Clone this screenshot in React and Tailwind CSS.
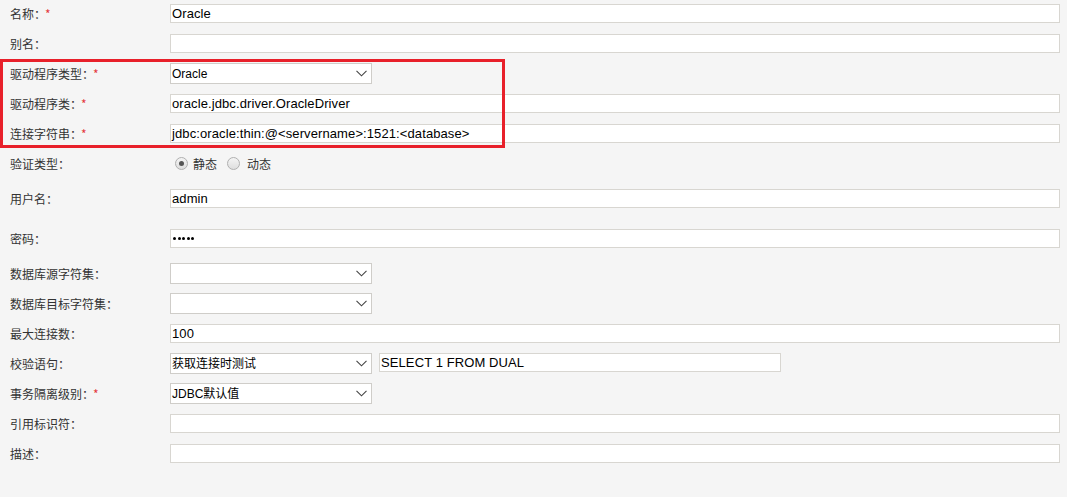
import React from "react";

const labelFont = { fontFamily: '"Noto Sans CJK SC", "Microsoft YaHei", sans-serif' };

function Label({ text, req }) {
  return (
    <div className="w-[170px] shrink-0 pl-[10px] h-[27px] flex items-center text-[12px] text-[#333]" style={labelFont}>
      <span>{text}：</span>
      {req && <span className="text-[#e4393c] -ml-[1px]">*</span>}
    </div>
  );
}

function TextBox({ value, children, className = "" }) {
  return (
    <div
      className={`mt-[4px] h-[19px] bg-white border border-[#d8d6d1] flex items-center pl-[1px] text-[13px] tracking-[0.1px] text-black whitespace-nowrap overflow-hidden ${className}`}
      style={{ fontFamily: '"Liberation Sans", Arial, "Noto Sans CJK SC", sans-serif' }}
    >
      {value}
      {children}
    </div>
  );
}

function Chevron() {
  return (
    <svg width="11" height="7" viewBox="0 0 11 7" className="shrink-0">
      <polyline points="0.5,0.8 5.5,5.8 10.5,0.8" fill="none" stroke="#444" strokeWidth="1.1" />
    </svg>
  );
}

function Select({ value }) {
  return (
    <div
      className="mt-[3px] w-[202px] h-[21px] bg-white border border-[#cfcdc9] flex items-center justify-between pl-[1px] pr-[4px] text-[12px] text-black whitespace-nowrap"
      style={{ fontFamily: '"Liberation Sans", Arial, "Noto Sans CJK SC", sans-serif' }}
    >
      <span>{value}</span>
      <Chevron />
    </div>
  );
}

function Row({ h, children }) {
  return (
    <div className="flex items-start pr-[7px]">
      <div className={`flex items-start w-full ${h}`}>{children}</div>
    </div>
  );
}

function Radio({ checked }) {
  return (
    <span className="w-[13px] h-[13px] rounded-full border border-[#b0b0b0] bg-gradient-to-b from-[#f4f4f4] to-[#dedede] flex items-center justify-center shrink-0">
      {checked && <span className="w-[5px] h-[5px] rounded-full bg-[#555]" />}
    </span>
  );
}

export default function App() {
  return (
    <div className="relative w-[1067px] h-[497px] bg-[#f5f5f5] overflow-hidden">
      <div className="flex flex-col">
        <Row h="h-[30px]">
          <Label text="名称" req />
          <TextBox value="Oracle" className="flex-1" />
        </Row>
        <Row h="h-[30px]">
          <Label text="别名" />
          <TextBox value="" className="flex-1" />
        </Row>
        <Row h="h-[30px]">
          <Label text="驱动程序类型" req />
          <Select value="Oracle" />
        </Row>
        <Row h="h-[30px]">
          <Label text="驱动程序类" req />
          <TextBox value="oracle.jdbc.driver.OracleDriver" className="flex-1" />
        </Row>
        <Row h="h-[30px]">
          <Label text="连接字符串" req />
          <TextBox value="jdbc:oracle:thin:@<servername>:1521:<database>" className="flex-1" />
        </Row>
        <Row h="h-[35px]">
          <Label text="验证类型" />
          <div className="h-[27px] flex items-center pl-[5px] text-[12px] text-[#333]" style={labelFont}>
            <Radio checked />
            <span className="ml-[5px]">静态</span>
            <span className="ml-[10px]"><Radio /></span>
            <span className="ml-[7px]">动态</span>
          </div>
        </Row>
        <Row h="h-[40px]">
          <Label text="用户名" />
          <TextBox value="admin" className="flex-1" />
        </Row>
        <Row h="h-[35px]">
          <Label text="密码" />
          <TextBox className="flex-1">
            <span className="flex items-center gap-[1.5px] pl-[1px]">
              <span className="w-[3px] h-[3px] rounded-full bg-black" />
              <span className="w-[3px] h-[3px] rounded-full bg-black" />
              <span className="w-[3px] h-[3px] rounded-full bg-black" />
              <span className="w-[3px] h-[3px] rounded-full bg-black" />
              <span className="w-[3px] h-[3px] rounded-full bg-black" />
            </span>
          </TextBox>
        </Row>
        <Row h="h-[30px]">
          <Label text="数据库源字符集" />
          <Select value="" />
        </Row>
        <Row h="h-[30px]">
          <Label text="数据库目标字符集" />
          <Select value="" />
        </Row>
        <Row h="h-[30px]">
          <Label text="最大连接数" />
          <TextBox value="100" className="flex-1" />
        </Row>
        <Row h="h-[30px]">
          <Label text="校验语句" />
          <Select value="获取连接时测试" />
          <div
            className="ml-[7px] mt-[3px] w-[402px] h-[19px] bg-white border border-[#d8d6d1] flex items-center pl-[1px] text-[13px] tracking-[0.1px] text-black"
            style={{ fontFamily: '"Liberation Sans", Arial, sans-serif' }}
          >
            SELECT 1 FROM DUAL
          </div>
        </Row>
        <Row h="h-[30px]">
          <Label text="事务隔离级别" req />
          <Select value="JDBC默认值" />
        </Row>
        <Row h="h-[30px]">
          <Label text="引用标识符" />
          <TextBox value="" className="flex-1" />
        </Row>
        <Row h="h-[30px]">
          <Label text="描述" />
          <TextBox value="" className="flex-1" />
        </Row>
      </div>
      <div className="absolute left-0 top-[59px] w-[505px] h-[89px] border-[3px] border-[#e8202a] pointer-events-none" />
    </div>
  );
}
